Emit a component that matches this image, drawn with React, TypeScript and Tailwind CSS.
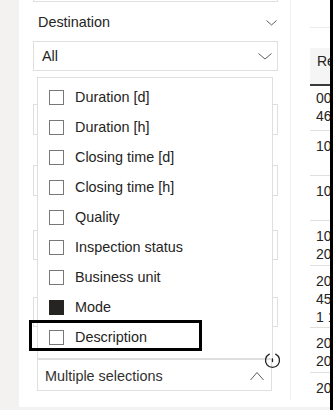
import React from "react";

const items = [
  "Duration [d]",
  "Duration [h]",
  "Closing time [d]",
  "Closing time [h]",
  "Quality",
  "Inspection status",
  "Business unit",
  "Mode",
  "Description",
];

function ChevronDown({ w, h }: { w: number; h: number }) {
  return (
    <svg width={w} height={h + 1} viewBox={`0 0 ${w} ${h + 1}`} fill="none">
      <path d={`M0.5 0.5 L${w / 2} ${h} L${w - 0.5} 0.5`} stroke="#605e5c" strokeWidth="1" />
    </svg>
  );
}

function ChevronUp({ w, h }: { w: number; h: number }) {
  return (
    <svg width={w} height={h + 1} viewBox={`0 0 ${w} ${h + 1}`} fill="none">
      <path d={`M0.5 ${h} L${w / 2} 0.5 L${w - 0.5} ${h}`} stroke="#605e5c" strokeWidth="1" />
    </svg>
  );
}

const rows: { h: string; pt: string; lines: string[] }[] = [
  { h: "h-[45px]", pt: "pt-[3px]", lines: ["0012", "4623"] },
  { h: "h-[45px]", pt: "pt-[6px]", lines: ["1003"] },
  { h: "h-[45px]", pt: "pt-[6px]", lines: ["1007"] },
  { h: "h-[45px]", pt: "pt-[6px]", lines: ["1012", "2021"] },
  { h: "h-[62px]", pt: "pt-[6px]", lines: ["2021", "4512", "1 1"] },
  { h: "h-[45px]", pt: "pt-[6px]", lines: ["2021", "2022"] },
  { h: "h-[45px]", pt: "pt-[6px]", lines: ["2022"] },
];

export default function App() {
  return (
    <div className="w-[333px] h-[410px] flex bg-[#f3f2f1] overflow-hidden font-['Liberation_Sans',Arial,sans-serif] text-[#252423]">
      <div className="w-[19px] shrink-0" />
      <div className="w-[311px] flex flex-col">
        <div className="h-[407px] shrink-0 bg-white flex">
          {/* slicer pane */}
          <div className="relative w-[271px] shrink-0 flex flex-col">
            <div className="ml-[14px] w-[245px] h-[2px] shrink-0 border-x border-b border-[#e1dfdd]" />
            <div className="ml-[14px] w-[245px] h-[26px] shrink-0 mt-[6px] pt-[3px] flex items-center justify-between pl-[5px] pr-[1px] text-[14.4px]">
              <span>Destination</span>
              <ChevronDown w={11} h={5} />
            </div>
            <div className="ml-[14px] w-[245px] h-[30px] shrink-0 mt-[7px] pt-px border border-[#e1dfdd] flex items-center justify-between pl-[8px] pr-[5px] text-[14.4px]">
              <span>All</span>
              <ChevronDown w={14} h={6} />
            </div>
            <div className="ml-[14px] w-[245px] h-[31px] shrink-0 mt-[33px] border border-[#e1dfdd]" />
            <div className="ml-[14px] w-[245px] h-[31px] shrink-0 mt-[30px] border border-[#e1dfdd]" />
            <div className="ml-[14px] w-[245px] h-[30px] shrink-0 mt-[34px] border border-[#e1dfdd]" />
            <div className="ml-[14px] w-[245px] h-[30px] shrink-0 mt-[37px] border border-[#e1dfdd]" />

            {/* open dropdown overlay */}
            <div className="absolute left-[18px] top-[77px] w-[236px]">
              <div className="h-[282px] border border-[#e1dfdd] bg-white pt-[4px]">
                {items.map((it) => (
                  <div key={it} className="h-[30px] flex items-center pl-[11px] gap-[11px] text-[14.4px]">
                    {it === "Mode" ? (
                      <div className="w-[15px] h-[15px] bg-[#252423]" />
                    ) : (
                      <div className="w-[15px] h-[15px] border border-[#7a7876] bg-white" />
                    )}
                    <span className="leading-none">{it}</span>
                  </div>
                ))}
              </div>
              <div className="w-[235px] h-[32px] border border-[#e1dfdd] flex items-center justify-between pt-[3px] pl-[7px] pr-[7px] text-[14.4px] text-[#323130]">
                <span>Multiple selections</span>
                <ChevronUp w={14} h={8} />
              </div>
            </div>

            {/* focus outline */}
            <div className="absolute left-[10px] top-[320px] w-[173px] h-[31px] border-[3px] border-black" />

            {/* busy indicator */}
            <div className="absolute left-[245px] top-[352px]">
              <svg width="17" height="17" viewBox="0 0 17 17" fill="none">
                <path d="M5.3 2.2 A7 7 0 1 0 11.7 2.2" stroke="#252423" strokeWidth="1.3" strokeLinecap="round" />
                <path d="M8.5 7 L8.5 9.5" stroke="#252423" strokeWidth="1.3" strokeLinecap="round" />
              </svg>
            </div>
          </div>

          <div className="w-px h-[400px] bg-[#f3f2f1] shrink-0" />

          {/* right table pane */}
          <div className="w-[39px] flex">
            <div className="w-[19px] shrink-0" />
            <div className="w-[20px] overflow-hidden flex flex-col">
              <div className="mt-[27px] h-px shrink-0 bg-[#edebe9]" />
              <div className="mt-[20px] h-[38px] shrink-0 bg-[#f5f5f5] border-b-2 border-[#3b3a39] pl-[7px] pt-[4px] text-[14px] leading-[18px] whitespace-nowrap">
                Request
              </div>
              {rows.map((r, i) => (
                <div
                  key={i}
                  className={`${r.h} ${r.pt} shrink-0 border-b border-[#e1dfdd] pl-[6px] text-[14px] leading-[18px] whitespace-nowrap`}
                >
                  {r.lines.map((l, j) => (
                    <div key={j}>{l}</div>
                  ))}
                </div>
              ))}
            </div>
          </div>
        </div>
        <div className="h-[3px] shrink-0" />
      </div>
      <div className="w-[3px] h-[410px] bg-black shrink-0" />
    </div>
  );
}
